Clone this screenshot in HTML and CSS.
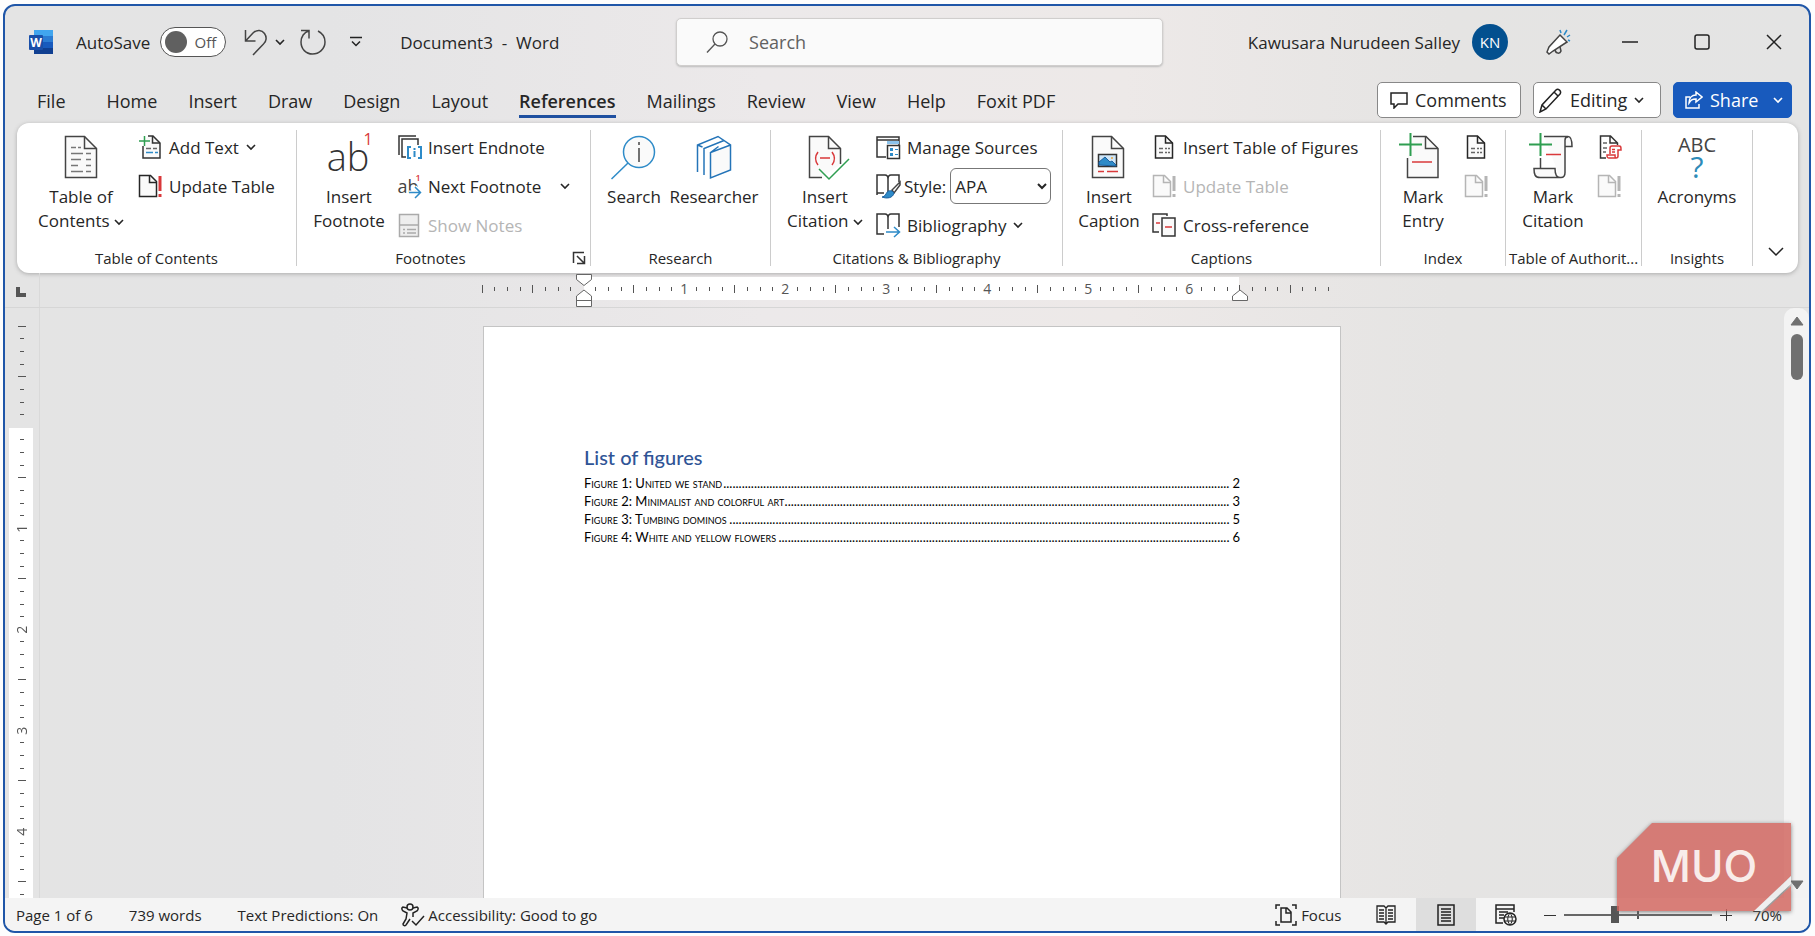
FILE: index.html
```html
<!DOCTYPE html>
<html lang="en">
<head>
    <meta charset="UTF-8">
    <meta name="viewport" content="width=device-width, initial-scale=1.0">
    <title>Document3 - Word</title>
    <link rel="stylesheet" href="styles.css">
</head>
<body>

    <svg class="sprite" aria-hidden="true">
        <symbol id="chevron" viewBox="0 0 10 10"><path d="M1 3l4 4 4-4" fill="none" stroke="currentColor" stroke-width="1.600"/></symbol>
        <symbol id="update" viewBox="0 0 24 24">
            <path d="M1.500 1.500h11l6 6v15h-17z" fill="#fafafa" stroke="currentColor" stroke-width="1.500"/>
            <path d="M11.500 1.500v7h7" fill="none" stroke="currentColor" stroke-width="1.500"/>
            <path d="M22 2v15M22 20v3" stroke="var(--mark)" stroke-width="3"/>
        </symbol>
        <symbol id="page-list" viewBox="0 0 24 24">
            <path d="M3.500 1h10l7 7v15h-17z" fill="#fafafa" stroke="currentColor" stroke-width="1.500"/>
            <path d="M13.500 1v7h7" fill="none" stroke="currentColor" stroke-width="1.500"/>
            <path d="M7 13.500h4M7 17.500h4M13 13.500h2M16 13.500h2M13 17.500h2M16 17.500h2" stroke="#666" stroke-width="1.500"/>
        </symbol>
    </svg>

    <div class="window">
        <header class="titlebar">
            <svg class="logo" viewBox="0 0 26 26">
                <path d="M6 1h19v6H6z" fill="#41a5ee"/>
                <path d="M6 7h19v6H6z" fill="#2b7cd3"/>
                <path d="M6 13h19v6H6z" fill="#185abd"/>
                <path d="M6 19h19v6H6z" fill="#103f91"/>
                <rect x="1" y="6" width="14" height="15" rx="1" fill="#1a4fa8"/>
                <text x="8" y="18" text-anchor="middle" font-size="12" font-weight="700" fill="#fff">W</text>
            </svg>
            <span class="autosave" id="autosave-label">AutoSave</span>
            <button class="toggle" type="button" role="switch" aria-checked="false" aria-labelledby="autosave-label"><span class="toggle__knob"></span>Off</button>
            <button class="icon-button undo" type="button" aria-label="Undo">
                <svg width="24" height="28" viewBox="0 0 24 28"><path d="M1.500 2v11h10M2 12.500L9 5c4-4 9-3 11.500.500s2 8-1 10.500L9 27" fill="none" stroke="#444" stroke-width="1.500"/></svg>
                <svg class="chevron"><use href="#chevron"/></svg>
            </button>
            <button class="icon-button redo" type="button" aria-label="Redo">
                <svg width="28" height="28" viewBox="0 0 28 28"><path d="M2 2.500h8v8M10 3C5 4 2 9 2 14c0 7 5 12 11.500 12S26 21 26 14c0-5-3-9-7-11" fill="none" stroke="#444" stroke-width="1.500"/></svg>
            </button>
            <button class="icon-button customize" type="button" aria-label="Customize Quick Access Toolbar">
                <svg width="12" height="12" viewBox="0 0 12 12"><path d="M0 1.500h12M2 5.500l4 4 4-4" fill="none" stroke="#222" stroke-width="1.500"/></svg>
            </button>
            <span class="title">Document3&nbsp; -&nbsp; Word</span>
            <label class="search">
                <svg width="24" height="24" viewBox="0 0 24 24"><circle cx="15" cy="9" r="7" fill="none" stroke="#555" stroke-width="1.300"/><path d="M10 14L2 22.500" stroke="#555" stroke-width="1.300"/></svg>
                <input class="search__input" type="text" placeholder="Search" aria-label="Search">
            </label>
            <div class="account">
                <span class="account__name">Kawusara Nurudeen Salley</span>
                <span class="avatar">KN</span>
                <button class="icon-button" type="button" aria-label="Coming soon">
                    <svg width="28" height="28" viewBox="0 0 28 28">
                        <path d="M16 7l7 7L9 23l-4 3-2-2 2-5z" fill="#fff" stroke="#444" stroke-width="1.500"/>
                        <path d="M11 22c1 4 5 4 6 1l-1-4" fill="none" stroke="#444" stroke-width="1.500"/>
                        <path d="M17 5l-1-3M20 7l3-5M23 9l3-2M24 12l2 1" stroke="#2e8bc8" stroke-width="1.500"/>
                    </svg>
                </button>
                <button class="icon-button" type="button" aria-label="Minimize"><svg width="18" height="18" viewBox="0 0 18 18"><path d="M1 9h16" stroke="#222" stroke-width="1.500"/></svg></button>
                <button class="icon-button" type="button" aria-label="Maximize"><svg width="18" height="18" viewBox="0 0 18 18"><rect x="2" y="2" width="14" height="14" rx="2" fill="none" stroke="#222" stroke-width="1.500"/></svg></button>
                <button class="icon-button" type="button" aria-label="Close"><svg width="18" height="18" viewBox="0 0 18 18"><path d="M2 2l14 14M16 2L2 16" stroke="#222" stroke-width="1.500"/></svg></button>
            </div>
        </header>

        <nav class="tabs">
            <a class="tab tab--file" href="#">File</a>
            <a class="tab" href="#">Home</a>
            <a class="tab" href="#">Insert</a>
            <a class="tab" href="#">Draw</a>
            <a class="tab" href="#">Design</a>
            <a class="tab" href="#">Layout</a>
            <a class="tab tab--active" href="#">References</a>
            <a class="tab" href="#">Mailings</a>
            <a class="tab" href="#">Review</a>
            <a class="tab" href="#">View</a>
            <a class="tab" href="#">Help</a>
            <a class="tab" href="#">Foxit PDF</a>
            <div class="actions">
                <button class="action action--comments" type="button">
                    <svg width="18" height="18" viewBox="0 0 18 18"><path d="M1 2h16v11H8l-4 4v-4H1z" fill="none" stroke="#222" stroke-width="1.500"/></svg>
                    Comments
                </button>
                <button class="action action--editing" type="button">
                    <svg width="24" height="26" viewBox="0 0 24 26"><path d="M1 25l2-7L17 3c2-2 6 1 4 4L7 22zM3 18l4 4M15 5l4 4" fill="none" stroke="#222" stroke-width="1.500"/></svg>
                    Editing
                    <svg class="chevron"><use href="#chevron"/></svg>
                </button>
                <button class="action action--share" type="button">
                    <svg width="18" height="18" viewBox="0 0 18 18"><path d="M5 6H1v11h13v-4M11 1l6 5-6 5V8c-4 0-5 1-7 4 0-5 3-8 7-8z" fill="none" stroke="#fff" stroke-width="1.500"/></svg>
                    Share
                    <svg class="chevron"><use href="#chevron"/></svg>
                </button>
            </div>
        </nav>

        <section class="ribbon">
            <div class="group group--toc">
                <div class="group__body">
                    <button class="big" type="button">
                        <svg class="big__icon" viewBox="0 0 48 46">
                            <path d="M8.500 2.500h19l12 12v29h-31z" fill="#fafafa" stroke="#444" stroke-width="1.500"/>
                            <path d="M27.500 2.500v12h12" fill="none" stroke="#444" stroke-width="1.500"/>
                            <path d="M14 13.500h5M21 13.500h3M14 19.500h12M14 25.500h10M14 31.500h7M14 37.500h12M29 19.500h5M29 25.500h5M29 31.500h5M29 37.500h5" stroke="#777" stroke-width="1.500"/>
                        </svg>
                        <span>Table of<br>Contents <svg class="chevron"><use href="#chevron"/></svg></span>
                    </button>
                    <div class="stack">
                        <button class="small" type="button">
                            <svg class="small__icon" viewBox="0 0 24 24">
                                <path d="M10 1h5l7 7v15H5V11" fill="#fafafa" stroke="#333" stroke-width="1.500"/>
                                <path d="M14.500 1v7H22" fill="none" stroke="#333" stroke-width="1.500"/>
                                <path d="M8 17.500h7M17 17.500h3" stroke="#2e8bc8" stroke-width="1.500"/>
                                <path d="M8 13.500h5M15 13.500h4" stroke="#666" stroke-width="1.500"/>
                                <path d="M1 6h11M6.500 1v10" stroke="#2f9e51" stroke-width="1.500"/>
                            </svg>
                            Add Text <svg class="chevron"><use href="#chevron"/></svg>
                        </button>
                        <button class="small" type="button"><svg class="small__icon"><use href="#update"/></svg>Update Table</button>
                    </div>
                </div>
                <div class="group__label">Table of Contents</div>
            </div>

            <div class="group group--footnotes">
                <div class="group__body">
                    <button class="big" type="button">
                        <svg class="big__icon" viewBox="0 0 48 46">
                            <text x="23" y="37" text-anchor="middle" font-size="38" font-weight="300" fill="#333">ab</text>
                            <text x="43" y="11" text-anchor="middle" font-size="16" fill="#d9383a">1</text>
                        </svg>
                        <span>Insert<br>Footnote</span>
                    </button>
                    <div class="stack">
                        <button class="small" type="button">
                            <svg class="small__icon" viewBox="0 0 24 24">
                                <path d="M2 20V1h17M9 22H5V4h16v6" fill="none" stroke="#333" stroke-width="1.500"/>
                                <path d="M14 12h-3v11h3M21 12h3v11h-3M17.500 16v6M17.500 13v2" fill="none" stroke="#2e8bc8" stroke-width="2"/>
                            </svg>
                            Insert Endnote
                        </button>
                        <button class="small small--wide" type="button">
                            <svg class="small__icon" viewBox="0 0 24 24">
                                <text x="11" y="19" text-anchor="middle" font-size="18" fill="#444">ab</text>
                                <text x="21" y="7" text-anchor="middle" font-size="9" font-weight="600" fill="#d9383a">1</text>
                                <path d="M12 18.500h11M18 13l5.500 5.500L18 24" fill="none" stroke="#fff" stroke-width="4"/>
                                <path d="M12 18.500h11M18 13l5.500 5.500L18 24" fill="none" stroke="#2e8bc8" stroke-width="1.500"/>
                            </svg>
                            Next Footnote <svg class="chevron"><use href="#chevron"/></svg>
                        </button>
                        <button class="small" type="button" disabled>
                            <svg class="small__icon" viewBox="0 0 24 24"><path d="M2.500 1.500h19v22h-19zM2.500 12h19" fill="#eee" stroke="#aaa" stroke-width="1.500"/><path d="M6 16.500h2M10 16.500h9M6 20h2M10 20h9" stroke="#aaa" stroke-width="1.500"/></svg>
                            Show Notes
                        </button>
                    </div>
                </div>
                <div class="group__label group__label--footnotes">
                    <span>Footnotes</span>
                    <button class="icon-button launcher" type="button" aria-label="Footnote settings"><svg width="14" height="14" viewBox="0 0 14 14"><path d="M1.500 12V1.500H12M5 5l7 7M12.500 5v7.500H5" fill="none" stroke="#333" stroke-width="1.500"/></svg></button>
                </div>
            </div>

            <div class="group group--research">
                <div class="group__body">
                    <button class="big" type="button">
                        <svg class="big__icon" viewBox="0 0 48 46">
                            <circle cx="29" cy="18" r="15.500" fill="#fafafa" stroke="#2e8bc8" stroke-width="1.500"/>
                            <path d="M18 29L1.500 45" stroke="#2e8bc8" stroke-width="1.500"/>
                            <path d="M29 14v14M29 8v3" stroke="#444" stroke-width="1.500"/>
                        </svg>
                        <span>Search</span>
                    </button>
                    <button class="big" type="button">
                        <svg class="big__icon" viewBox="0 0 48 46">
                            <path d="M20.500 18.500l20-7.500v25l-20 8z" fill="#fafafa"/>
                            <path d="M7.500 38V11L28 2.500 40.500 11v25l-20 8V18.500L40.500 11M14 41V14.500L34 6.500M20.500 18.500l8-6M7.500 11l5 2" fill="none" stroke="#2474b8" stroke-width="1.500"/>
                        </svg>
                        <span>Researcher</span>
                    </button>
                </div>
                <div class="group__label">Research</div>
            </div>

            <div class="group group--citations">
                <div class="group__body">
                    <button class="big" type="button">
                        <svg class="big__icon" viewBox="0 0 48 46">
                            <path d="M21 43.500H8.500v-41h19l12 12V30" fill="#fafafa" stroke="#444" stroke-width="1.500"/>
                            <path d="M27.500 2.500v12h12" fill="none" stroke="#444" stroke-width="1.500"/>
                            <path d="M17 18c-3 4-3 9 0 13M31 18c3 4 3 9 0 13M19 24h10" fill="none" stroke="#d9383a" stroke-width="1.500"/>
                            <path d="M18 35l10 10 20-20" fill="none" stroke="#2f9e51" stroke-width="1.500"/>
                        </svg>
                        <span>Insert<br>Citation <svg class="chevron"><use href="#chevron"/></svg></span>
                    </button>
                    <div class="stack">
                        <button class="small" type="button">
                            <svg class="small__icon" viewBox="0 0 24 24">
                                <path d="M10 22H1V2h22v8M1 5h22" fill="none" stroke="#333" stroke-width="1.500"/>
                                <path d="M11 6h12v3H11z" fill="#8cc3ec"/>
                                <path d="M11.500 10.500h12v13h-12z" fill="#fff" stroke="#333" stroke-width="1.500"/>
                                <path d="M14 13h3v3h-3zM14 18h3v3h-3zM19 14h3v1h-3zM19 19h3v1h-3z" fill="#2e8bc8"/>
                            </svg>
                            Manage Sources
                        </button>
                        <label class="style-row">
                            <svg class="small__icon" viewBox="0 0 24 24">
                                <path d="M1 21V1h8c2 0 3 2 3 4v13M12 5c0-2 1-4 3-4h8v7M1 19h7" fill="none" stroke="#333" stroke-width="1.500"/>
                                <path d="M24 8l-8 8 2 3 6-8z" fill="#fff" stroke="#444" stroke-width="1.500"/>
                                <path d="M16 17c-4-1-5 1-6 3s-3 3-4 3c5 2 11 1 12-4z" fill="#2e8bc8" stroke="#1c5f9e"/>
                            </svg>
                            Style:
                            <select class="style-select"><option>APA</option></select>
                        </label>
                        <button class="small" type="button">
                            <svg class="small__icon" viewBox="0 0 24 24">
                                <path d="M8 21H1V1h8c2 0 3 2 3 4v11M12 5c0-2 1-4 3-4h8v13" fill="none" stroke="#333" stroke-width="1.500"/>
                                <path d="M10 19h13M18 14l5.500 5-5.500 5" fill="none" stroke="#2e8bc8" stroke-width="1.500"/>
                            </svg>
                            Bibliography <svg class="chevron"><use href="#chevron"/></svg>
                        </button>
                    </div>
                </div>
                <div class="group__label">Citations &amp; Bibliography</div>
            </div>

            <div class="group group--captions">
                <div class="group__body">
                    <button class="big" type="button">
                        <svg class="big__icon" viewBox="0 0 48 46">
                            <path d="M7.500 2.500h19l12 12v29h-31z" fill="#fafafa" stroke="#444" stroke-width="1.500"/>
                            <path d="M26.500 2.500v12h12" fill="none" stroke="#444" stroke-width="1.500"/>
                            <path d="M13.500 20.500h18v12h-18z" fill="#cfe6f8" stroke="#333" stroke-width="1.500"/>
                            <path d="M14 31v-3l6-5 5 5 2-1 4 4v1z" fill="#2e8bc8" stroke="#1c5f9e"/>
                            <circle cx="27" cy="24" r="1" fill="#e8a33d"/>
                            <path d="M13 37.500h6M22 37.500h11" stroke="#d9383a" stroke-width="1.500"/>
                        </svg>
                        <span>Insert<br>Caption</span>
                    </button>
                    <div class="stack">
                        <button class="small" type="button"><svg class="small__icon"><use href="#page-list"/></svg>Insert Table of Figures</button>
                        <button class="small" type="button" disabled><svg class="small__icon"><use href="#update"/></svg>Update Table</button>
                        <button class="small" type="button">
                            <svg class="small__icon" viewBox="0 0 24 24">
                                <path d="M7 19H1V1h14v2" fill="#fafafa" stroke="#333" stroke-width="1.500"/>
                                <path d="M10 5h13v18H10z" fill="#fafafa" stroke="#333" stroke-width="1.500"/>
                                <path d="M4 10h4M13 14h7" stroke="#d9383a" stroke-width="1.500"/>
                            </svg>
                            Cross-reference
                        </button>
                    </div>
                </div>
                <div class="group__label">Captions</div>
            </div>

            <div class="group group--index">
                <div class="group__body">
                    <button class="big" type="button">
                        <svg class="big__icon" viewBox="0 0 48 46">
                            <path d="M14 2.500h13l12 12v29H8.500V24" fill="#fafafa" stroke="#444" stroke-width="1.500"/>
                            <path d="M26.500 2.500v12H39" fill="none" stroke="#444" stroke-width="1.500"/>
                            <path d="M13 28h20" stroke="#d9383a" stroke-width="1.500"/>
                            <path d="M0 10.500h23M11.500-1v23" stroke="#2f9e51" stroke-width="2"/>
                        </svg>
                        <span>Mark<br>Entry</span>
                    </button>
                    <div class="stack">
                        <button class="small" type="button" aria-label="Insert Index"><svg class="small__icon"><use href="#page-list"/></svg></button>
                        <button class="small" type="button" aria-label="Update Index" disabled><svg class="small__icon"><use href="#update"/></svg></button>
                    </div>
                </div>
                <div class="group__label">Index</div>
            </div>

            <div class="group group--authorities">
                <div class="group__body">
                    <button class="big" type="button">
                        <svg class="big__icon" viewBox="0 0 48 46">
                            <path d="M15 2.500h24c3 0 4 3 4 10h-7v26c0 4-2 5-4 5H11c-5 0-6-3-6-9h21c0 6 2 9 5 9M36 12V6c0-2 1-3 3-3M11.500 34V24" fill="#fafafa" stroke="#444" stroke-width="1.500"/>
                            <path d="M17 20.500h15" stroke="#d9383a" stroke-width="1.500"/>
                            <path d="M0 10.500h23M11.500-1v23" stroke="#2f9e51" stroke-width="2"/>
                        </svg>
                        <span>Mark<br>Citation</span>
                    </button>
                    <div class="stack">
                        <button class="small" type="button" aria-label="Insert Table of Authorities">
                            <svg class="small__icon" viewBox="0 0 24 24">
                                <path d="M9 23H3.500V1h10l7 7v2M13 1v7h7" fill="none" stroke="#333" stroke-width="1.500"/>
                                <path d="M6 8h4M6 13h4M6 17h3" stroke="#666" stroke-width="1.500"/>
                                <path d="M13 19v-6c0-1 1-2 2-2h7c2 0 2 1 2 4h-3v6c0 1-1 2-2 2h-7c-2 0-2-1-2-3h8c0 2 0 3 1 3M15 14.500h3M15 17h3" fill="none" stroke="#d9383a" stroke-width="1.500"/>
                            </svg>
                        </button>
                        <button class="small" type="button" aria-label="Update Table of Authorities" disabled><svg class="small__icon"><use href="#update"/></svg></button>
                    </div>
                </div>
                <div class="group__label">Table of Authorit...</div>
            </div>

            <div class="group group--insights">
                <div class="group__body">
                    <button class="big" type="button">
                        <svg class="big__icon" viewBox="0 0 48 46">
                            <text x="24" y="18" text-anchor="middle" font-size="20" fill="#444">ABC</text>
                            <text x="24" y="44" text-anchor="middle" font-size="30" fill="#2e8bb8">?</text>
                        </svg>
                        <span>Acronyms</span>
                    </button>
                </div>
                <div class="group__label">Insights</div>
            </div>

            <button class="icon-button collapse" type="button" aria-label="Ribbon display options"><svg width="16" height="10" viewBox="0 0 16 10"><path d="M1 1l7 7 7-7" fill="none" stroke="#222" stroke-width="1.500"/></svg></button>
        </section>

        <div class="ruler-row">
            <div class="tab-stop"><svg width="10" height="10" viewBox="0 0 10 10"><path d="M2 0v8h8" fill="none" stroke="#555" stroke-width="4"/></svg></div>
            <div class="ruler">
                <div class="ruler__scale">
                    <div class="ruler__text-area"></div>
                    <div class="ticks"></div>
                    <svg class="indent indent--left" viewBox="0 0 16 34"><path d="M.500 1.500h15v5l-7.500 6-7.500-6zM.500 33.500V23L8 17l7.500 6v10.500zM.500 27.500h15" fill="#fff" stroke="#666"/></svg>
                    <svg class="indent indent--right" viewBox="0 0 16 34"><path d="M.500 27.500V23L8 17l7.500 6v4.500z" fill="#fff" stroke="#666"/></svg>
                </div>
            </div>
            <div class="ruler-row__end"></div>
        </div>

        <main class="workspace">
            <div class="vruler">
                <div class="vruler__scale">
                    <div class="vruler__text-area"></div>
                    <div class="vticks"></div>
                </div>
            </div>
            <div class="canvas">
                <article class="page">
                    <h1 class="page__heading">List of figures</h1>
                    <p class="figure"><span>Figure 1: United we stand</span><span class="leader"></span><span>2</span></p>
                    <p class="figure"><span>Figure 2: Minimalist and colorful art</span><span class="leader"></span><span>3</span></p>
                    <p class="figure"><span>Figure 3: Tumbing dominos</span><span class="leader"></span><span>5</span></p>
                    <p class="figure"><span>Figure 4: White and yellow flowers</span><span class="leader"></span><span>6</span></p>
                </article>
            </div>
            <div class="scrollbar">
                <svg width="14" height="10" viewBox="0 0 14 10"><path d="M7 1l6 8H1z" fill="#707070" stroke="#707070" stroke-linejoin="round"/></svg>
                <div class="scrollbar__thumb"></div>
                <svg class="scrollbar__down" width="14" height="10" viewBox="0 0 14 10"><path d="M7 9l6-8H1z" fill="#707070" stroke="#707070" stroke-linejoin="round"/></svg>
            </div>
        </main>

        <footer class="status">
            <span class="status__item">Page 1 of 6</span>
            <span class="status__item">739 words</span>
            <span class="status__item">Text Predictions: On</span>
            <span class="status__item status__item--access">
                <svg width="24" height="24" viewBox="0 0 24 24">
                    <circle cx="9" cy="4" r="3" fill="none" stroke="#222" stroke-width="1.500"/>
                    <path d="M6 5L2 4c-2 1-1 3 0 4l4 2-1 6-3 5c0 2 2 2 3 1l4-6M12 5l4-1c2 1 1 3 0 4l-4 2v4M11 18l4 4 8-9" fill="none" stroke="#222" stroke-width="1.500"/>
                </svg>
                Accessibility: Good to go
            </span>
            <div class="view">
                <button class="view__focus" type="button">
                    <svg width="22" height="22" viewBox="0 0 22 22"><path d="M5 1H1v4M17 1h4v4M5 21H1v-4M17 21h4v-4M6 4h6l4 4v10H6zM11 4v5h5" fill="none" stroke="#222" stroke-width="1.500"/></svg>
                    Focus
                </button>
                <button class="view__mode" type="button" aria-label="Read Mode"><svg width="20" height="20" viewBox="0 0 20 20"><path d="M10 3L8 1H1v16h7l2 2 2-2h7V1h-7zM10 3v16M3 5h5M3 8h5M3 11h5M3 14h5M12 5h5M12 8h5M12 11h5M12 14h5" fill="none" stroke="#222" stroke-width="1.300"/></svg></button>
                <button class="view__mode view__mode--active" type="button" aria-label="Print Layout"><svg width="18" height="22" viewBox="0 0 18 22"><path d="M1 1h16v20H1zM4 5h10M4 8h10M4 11h10M4 14h10M4 17h10" fill="none" stroke="#222" stroke-width="1.500"/></svg></button>
                <button class="view__mode" type="button" aria-label="Web Layout"><svg width="22" height="22" viewBox="0 0 22 22"><path d="M8 19H1V1h18v7M1 5h18M4 8h9M4 11h5M4 14h5" fill="none" stroke="#222" stroke-width="1.500"/><circle cx="15" cy="15" r="6" fill="#f4f4f4" stroke="#222" stroke-width="1.500"/><path d="M9 13h12M9 17h12M15 9c-3 4-3 8 0 12M15 9c3 4 3 8 0 12" fill="none" stroke="#222"/></svg></button>
                <button class="view__zoom-step" type="button" aria-label="Zoom out"><svg width="12" height="12" viewBox="0 0 12 12"><path d="M0 6.500h12" stroke="#333"/></svg></button>
                <input class="zoom" type="range" min="0" max="100" value="33" aria-label="Zoom">
                <button class="view__zoom-step" type="button" aria-label="Zoom in"><svg width="12" height="12" viewBox="0 0 12 12"><path d="M0 6.500h12M6.500 0v12" stroke="#333"/></svg></button>
                <span class="view__percent">70%</span>
            </div>
        </footer>
    </div>

    <div class="watermark">
        <svg class="watermark__shape" viewBox="0 0 176 92">
            <path d="M1 36L36 1h139v53l-36 35H1z" fill="#d2655e"/>
            <path d="M175 54v8l-29 27h-8z" fill="#eee"/>
            <path d="M175 64v25h-27z" fill="#d2655e"/>
        </svg>
        <span class="watermark__text">MUO</span>
    </div>

    <script>
        const perInch = 8
        const pageRows = 88

        const buildTicks = (output, count, lastNumber) => {
            for (let i = 0; i < count; i++) {
                const cell = document.createElement('span')
                const inch = (i - perInch) / perInch
                cell.className = 'tick'
                if (inch > 0 && inch % 1 == 0 && inch <= lastNumber) {
                    cell.classList.add('tick--number')
                    cell.innerHTML = inch
                } else if (inch == 0) {
                    cell.classList.add('tick--zero')
                } else if (i % 4 == 0) {
                    cell.classList.add('tick--half')
                }
                output.appendChild(cell)
            }
        }

        // only the rows that fit above the status bar
        const vticks = document.querySelector('.vticks')
        const room = document.querySelector('.workspace').clientHeight - 12
        const rows = Math.min(pageRows, Math.ceil(room / (vticks.clientHeight / pageRows)))

        buildTicks(document.querySelector('.ticks'), 68, 6)
        buildTicks(vticks, rows, 10)

        document.querySelectorAll('.leader').forEach((leader) => {
            const width = leader.clientWidth
            const probe = document.createElement('span')
            probe.textContent = '.'.repeat(100)
            leader.appendChild(probe)
            const dot = probe.getBoundingClientRect().width / 100
            leader.textContent = '.'.repeat(Math.floor(width / dot))
        })
    </script>
</body>
</html>
```

FILE: styles.css
```css
* {
    box-sizing: border-box;
}

body {
    margin: 0;
    height: 100vh;
    padding: 4px 4px 3px 3px;
    background: #fdfdfd;
    color: #262626;
    font-family: "Open Sans", "Noto Sans", sans-serif;
    font-size: 17px;
    display: flex;
}

button, input, select {
    font: inherit;
    color: inherit;
    margin: 0;
}

button {
    border: none;
    background: none;
    padding: 0;
    cursor: pointer;
}

svg {
    flex: none;
}

.sprite {
    position: absolute;
    width: 0;
    height: 0;
}

.chevron {
    width: 10px;
    height: 10px;
}

.window {
    flex: 1;
    min-width: 0;
    border: 2px solid #1f56a8;
    border-radius: 12px;
    overflow: hidden;
    display: flex;
    flex-direction: column;
    background: linear-gradient(90deg, #e4e4e4 0%, #e4e4e5 18%, #ece9ea 42%, #ede9e8 62%, #e5e4e3 80%, #e4e4e4 100%);
}

/* title bar */
.titlebar {
    height: 72px;
    flex: none;
    position: relative;
    display: flex;
    align-items: center;
    padding-left: 23px;
}

.icon-button {
    display: flex;
    align-items: center;
    justify-content: center;
}

.logo {
    width: 26px;
    height: 26px;
    margin-right: 22px;
}

.toggle {
    width: 66px;
    height: 30px;
    margin-left: 10px;
    padding: 0 9px 0 4px;
    border: 1px solid #555;
    border-radius: 15px;
    background: #fff;
    font-size: 15px;
    color: #555;
    display: flex;
    align-items: center;
    justify-content: space-between;
}

.toggle__knob {
    width: 22px;
    height: 22px;
    border-radius: 50%;
    background: #606060;
}

.undo {
    margin-left: 18px;
    gap: 7px;
}

.redo {
    margin-left: 14px;
}

.customize {
    margin-left: 23px;
}

.title {
    margin-left: 38px;
}

.search {
    position: absolute;
    left: 37.200%;
    width: 27%;
    top: 12px;
    height: 48px;
    border: 1px solid #d0cecd;
    border-radius: 5px;
    background: #fafafa;
    box-shadow: 0 1px 2px #bbb;
    display: flex;
    align-items: center;
    gap: 20px;
    padding-left: 28px;
    font-size: 18px;
}

.search__input {
    flex: 1;
    min-width: 0;
    border: none;
    outline: none;
    background: none;
    padding: 0;
}

.search__input::placeholder {
    color: #616161;
    opacity: 1;
}

.account {
    margin-left: auto;
    display: flex;
    align-items: center;
}

.avatar {
    width: 36px;
    height: 36px;
    margin: 0 36px 0 12px;
    border-radius: 50%;
    background: #03508f;
    color: #fff;
    font-size: 15px;
    line-height: 36px;
    text-align: center;
}

.account .icon-button {
    width: 28px;
    margin-right: 44px;
}

.account .icon-button:last-child {
    margin-right: 21px;
}

/* tabs */
.tabs {
    flex: none;
    height: 45px;
    display: flex;
    align-items: center;
    padding: 4px 17px 0 32px;
    gap: 31px;
    font-size: 18px;
}

.tab {
    color: inherit;
    text-decoration: none;
    line-height: 27px;
    border-bottom: 3px solid transparent;
    white-space: nowrap;
}

.tab--file {
    margin-right: 10px;
}

.tab--active {
    font-weight: 600;
    border-bottom-color: #1f50a0;
}

.actions {
    margin-left: auto;
    display: flex;
    gap: 12px;
    margin-top: -6px;
}

.action {
    height: 36px;
    padding: 0 12px;
    border: 1px solid #888;
    border-radius: 5px;
    background: #fff;
    display: flex;
    align-items: center;
    gap: 7px;
}

.action--comments {
    width: 144px;
}

.action--editing {
    width: 128px;
    padding: 0 5px;
}

.action--share {
    width: 119px;
    padding: 0 8px 0 11px;
    border-color: #185abd;
    background: #185abd;
    color: #fff;
}

.action--share .chevron {
    margin-left: auto;
}

/* ribbon */
.ribbon {
    flex: none;
    height: 150px;
    margin: 0 11px 0 12px;
    padding-top: 7px;
    border-radius: 12px;
    background: #fff;
    box-shadow: 0 1px 4px #aaa;
    display: flex;
    align-items: flex-start;
}

.group {
    flex: none;
    height: 136px;
    border-right: 1px solid #ccc;
}

.group__body {
    height: 119px;
    display: flex;
}

.group__label {
    font-size: 15px;
    line-height: 18px;
    text-align: center;
    white-space: nowrap;
}

.group--toc {
    width: 280px;
}

.group--toc .group__body {
    padding-left: 18px;
    gap: 11px;
}

.group--toc .big {
    width: 92px;
}

.group--footnotes {
    width: 294px;
}

.group--footnotes .group__body {
    padding-left: 12px;
    gap: 8px;
}

.group--footnotes .big {
    width: 80px;
}

.group--research {
    width: 180px;
}

.group--research .group__body {
    padding-left: 8px;
}

.group--research .big {
    width: 70px;
}

.group--research .big:last-child {
    width: 90px;
}

.group--citations {
    width: 292px;
}

.group--citations .group__body {
    padding-left: 12px;
    gap: 9px;
}

.group--citations .big {
    width: 84px;
}

.group--captions {
    width: 318px;
}

.group--captions .group__body {
    padding-left: 10px;
    gap: 7px;
}

.group--captions .big {
    width: 72px;
}

.group--index {
    width: 125px;
}

.group--index .group__body {
    padding-left: 12px;
    gap: 11px;
}

.group--index .big {
    width: 60px;
}

.group--authorities {
    width: 136px;
}

.group--authorities .group__body {
    padding-left: 10px;
    gap: 7px;
}

.group--authorities .big {
    width: 74px;
}

.group--insights {
    width: 111px;
}

.group--insights .big {
    width: 110px;
}

.group__label--footnotes {
    position: relative;
    padding-right: 26px;
}

.launcher {
    position: absolute;
    right: 4px;
    top: 2px;
}

.big {
    display: flex;
    flex-direction: column;
    align-items: center;
    gap: 5px;
    padding-top: 4px;
    line-height: 24px;
    white-space: nowrap;
}

.big__icon {
    width: 48px;
    height: 46px;
    overflow: visible;
}

.stack {
    display: flex;
    flex-direction: column;
    align-items: flex-start;
    gap: 3px;
    margin-top: -1px;
}

.small {
    height: 36px;
    display: flex;
    align-items: center;
    gap: 7px;
    white-space: nowrap;
    color: #262626;
    --mark: #d9383a;
}

.small:disabled {
    color: #b5b5b5;
    --mark: #b5b5b5;
}

.small--wide .chevron {
    margin-left: 12px;
}

.small__icon {
    width: 24px;
    height: 24px;
    flex: none;
    overflow: visible;
}

.style-row {
    height: 36px;
    display: flex;
    align-items: center;
    gap: 4px;
}

.style-select {
    width: 101px;
    height: 36px;
    padding: 0;
    border: 1px solid #777;
    border-radius: 6px;
    background: #fff;
}

.collapse {
    margin: 117px auto 0;
}

/* horizontal ruler */
.ruler-row {
    flex: none;
    height: 35px;
    display: flex;
    border-bottom: 1px solid #d6d6d6;
}

.tab-stop {
    width: 35px;
    padding: 14px 0 0 11px;
    border-right: 1px solid #d9d9d9;
}

.tab-stop svg {
    display: block;
}

.ruler {
    flex: 1;
    display: flex;
    justify-content: center;
}

.ruler-row__end {
    width: 25px;
}

.ruler__scale {
    width: 858px;
    position: relative;
    padding: 4px 0 0;
}

.ruler__text-area {
    height: 23px;
    margin: 0 102px 0 101px;
    background: #fff;
}

.ticks {
    position: absolute;
    top: 4px;
    left: -7px;
    width: 100%;
    height: 23px;
    display: flex;
    align-items: center;
}

.tick {
    flex: 1 1 0;
    display: flex;
    align-items: center;
    justify-content: center;
    min-width: 0;
    min-height: 0;
    font-size: 14px;
    line-height: 14px;
    color: #555;
}

.tick::before {
    content: "";
    width: 1px;
    height: 4px;
    background: #555;
}

.tick--half::before {
    height: 8px;
}

.tick--number::before, .tick--zero::before {
    display: none;
}

.indent {
    position: absolute;
    top: 0;
    width: 16px;
    height: 34px;
}

.indent--left {
    left: 93px;
}

.indent--right {
    right: 93px;
}

/* document area */
.workspace {
    flex: 1;
    min-height: 0;
    display: flex;
    overflow: hidden;
}

.vruler {
    width: 35px;
    padding: 18px 6px 0 4px;
    border-right: 1px solid #d9d9d9;
}

.vruler__scale {
    height: 1111px;
    position: relative;
    padding-top: 102px;
}

.vruler__text-area {
    height: 100%;
    background: #fff;
}

.vticks {
    position: absolute;
    top: -6px;
    left: 0;
    width: 26px;
    height: 100%;
    display: grid;
    grid-template-rows: repeat(88, minmax(0, 1fr));
}

.vticks .tick::before {
    width: 4px;
    height: 1px;
}

.vticks .tick--half::before {
    width: 8px;
}

.vticks .tick--number {
    writing-mode: vertical-rl;
    transform: rotate(180deg);
}

.canvas {
    flex: 1;
    padding-top: 18px;
    display: flex;
    justify-content: center;
}

.page {
    width: 858px;
    height: 1111px;
    padding: 117px 100px;
    background: #fff;
    border: 1px solid #c4c4c4;
    color: #000;
    font-family: Lato, sans-serif;
}

.page__heading {
    margin: 0 0 4px;
    color: #2f5496;
    font-size: 20px;
    line-height: 26px;
    font-weight: 500;
}

.figure {
    margin: 0;
    font-size: 13px;
    line-height: 18px;
    display: flex;
    font-variant: small-caps;
    white-space: nowrap;
}

.leader {
    flex: 1;
    min-width: 0;
    margin-right: 3px;
    text-align: right;
}

.scrollbar {
    width: 25px;
    padding: 8px 0;
    border-radius: 10px 10px 0 0;
    background: #f3f3f3;
    display: flex;
    flex-direction: column;
    align-items: center;
    gap: 8px;
}

.scrollbar__thumb {
    width: 12px;
    height: 46px;
    border-radius: 6px;
    background: #707070;
}

.scrollbar__down {
    margin-top: auto;
}

/* status bar */
.status {
    flex: none;
    height: 33px;
    background: #f4f4f4;
    display: flex;
    align-items: center;
    padding-left: 11px;
    font-size: 15px;
    white-space: nowrap;
}

.status__item {
    margin-right: 36px;
}

.status__item--access {
    display: flex;
    align-items: center;
    gap: 3px;
    margin-left: -13px;
}

.view {
    margin-left: auto;
    height: 100%;
    display: flex;
    align-items: center;
}

.view__focus {
    display: flex;
    align-items: center;
    gap: 4px;
    margin-right: 15px;
}

.view__mode {
    width: 60px;
    height: 100%;
    display: flex;
    align-items: center;
    justify-content: center;
}

.view__mode--active {
    background: #dedede;
}

.view__zoom-step {
    width: 12px;
    display: flex;
    margin: 0 8px;
}

.zoom {
    appearance: none;
    width: 148px;
    height: 18px;
    background: linear-gradient(#666, #666) center / 100% 2px no-repeat, linear-gradient(#555, #555) center / 2px 8px no-repeat;
}

.zoom::-webkit-slider-thumb {
    appearance: none;
    width: 8px;
    height: 17px;
    background: #555;
}

.view__percent {
    margin: 0 27px 0 12px;
}

/* corner logo */
.watermark {
    position: absolute;
    right: 23px;
    bottom: 22px;
    width: 176px;
    height: 92px;
    pointer-events: none;
}

.watermark__shape {
    width: 176px;
    height: 92px;
    opacity: 0.820;
    filter: drop-shadow(0 1px 2px #666);
}

.watermark__text {
    position: absolute;
    top: 14px;
    left: 0;
    width: 100%;
    color: #f8ecea;
    font-family: Inter, sans-serif;
    font-size: 44px;
    font-weight: 500;
    line-height: 60px;
    text-align: center;
}
```
